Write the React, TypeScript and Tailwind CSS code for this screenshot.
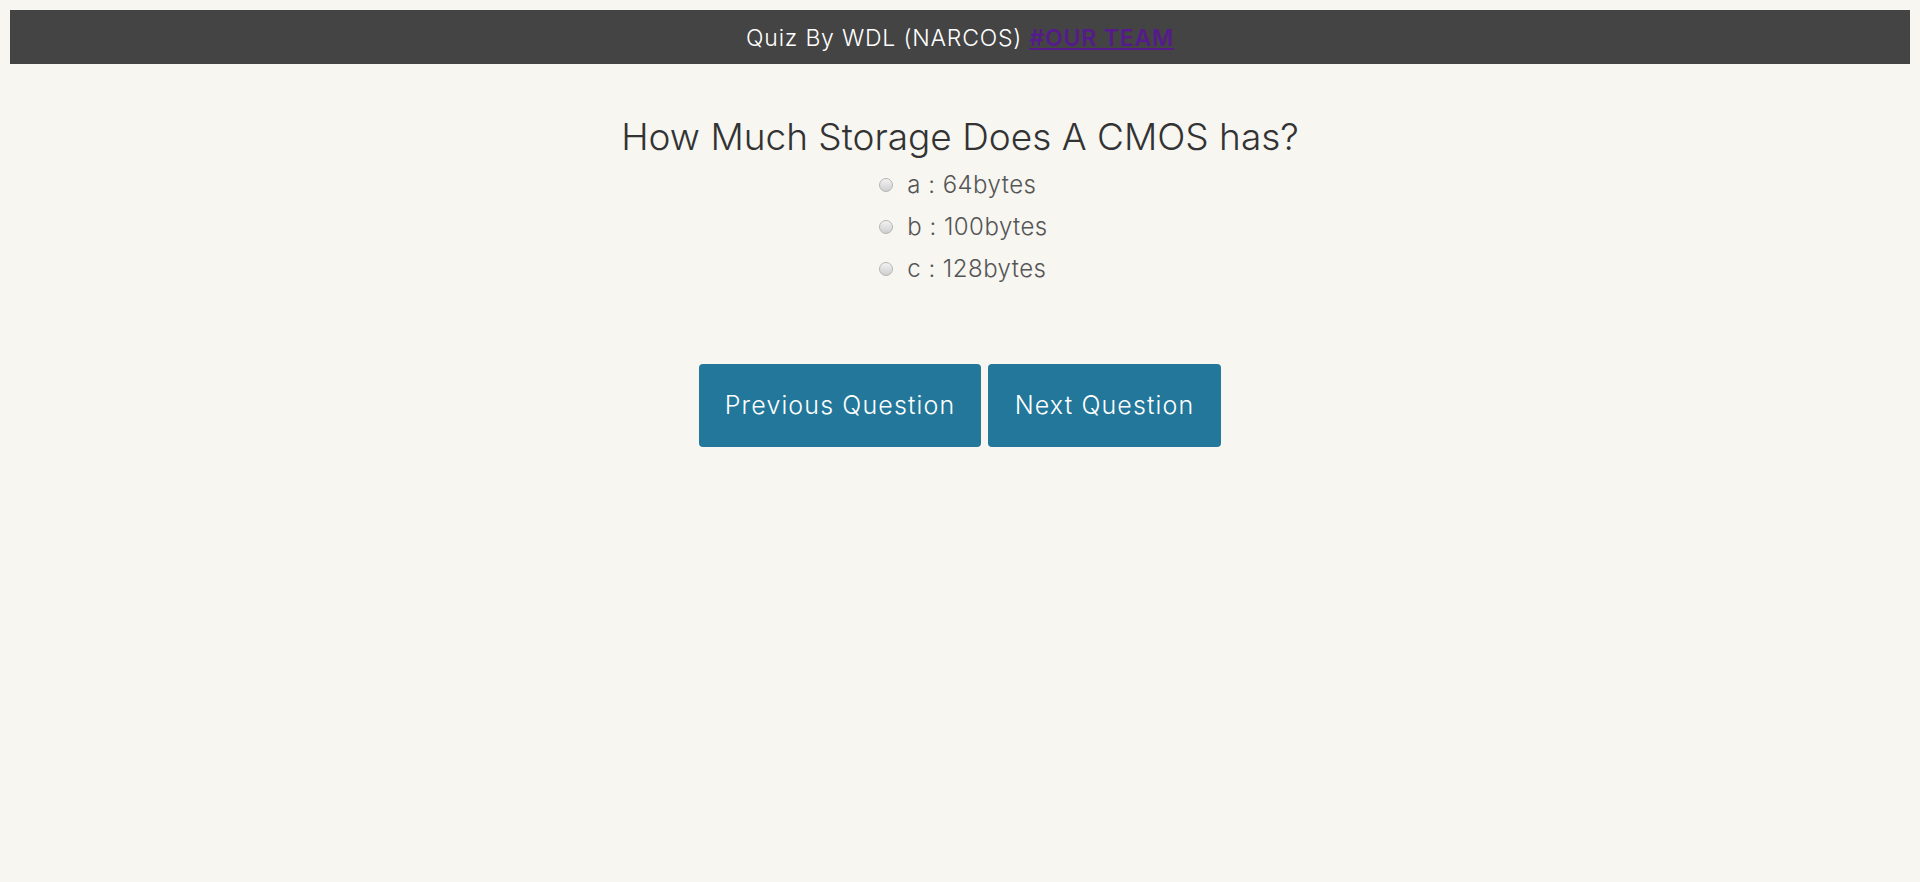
import React from "react";

export default function App() {
  const opts = ["a : 64bytes", "b : 100bytes", "c : 128bytes"];
  return (
    <div className="min-h-[882px] w-full bg-[#f7f6f1] p-[10px]" style={{ fontFamily: "Inter, 'Open Sans', sans-serif" }}>
      <div className="flex h-[54px] items-center justify-center bg-[#444444] pt-[2px] text-[23px] font-light tracking-[0.035em] text-white">
        <span>Quiz By WDL (NARCOS)&nbsp;</span>
        <a href="#" className="font-semibold text-[#551a8b] underline">#OUR TEAM</a>
      </div>
      <div className="flex flex-col items-center">
        <h2 className="mt-[51px] text-[37px] font-light leading-[44px] text-[#333]">How Much Storage Does A CMOS has?</h2>
        <div className="ml-[7px] mt-[11px] flex flex-col gap-[12px]">
          {opts.map((o) => (
            <label key={o} className="flex h-[30px] items-center text-[24px] font-light tracking-[0.02em] text-[#555]">
              <span className="mr-[14px] inline-block h-[14px] w-[14px] rounded-full border border-[#b5b5b5] bg-gradient-to-b from-[#f2f2f2] to-[#cfcfcf]" />
              {o}
            </label>
          ))}
        </div>
        <div className="mt-[80px] flex gap-[7px]">
          <button className="h-[83px] w-[282px] rounded-[4px] bg-[#22779a] text-[25px] font-light tracking-[0.045em] text-white">Previous Question</button>
          <button className="h-[83px] w-[233px] rounded-[4px] bg-[#22779a] text-[25px] font-light tracking-[0.045em] text-white">Next Question</button>
        </div>
      </div>
    </div>
  );
}
